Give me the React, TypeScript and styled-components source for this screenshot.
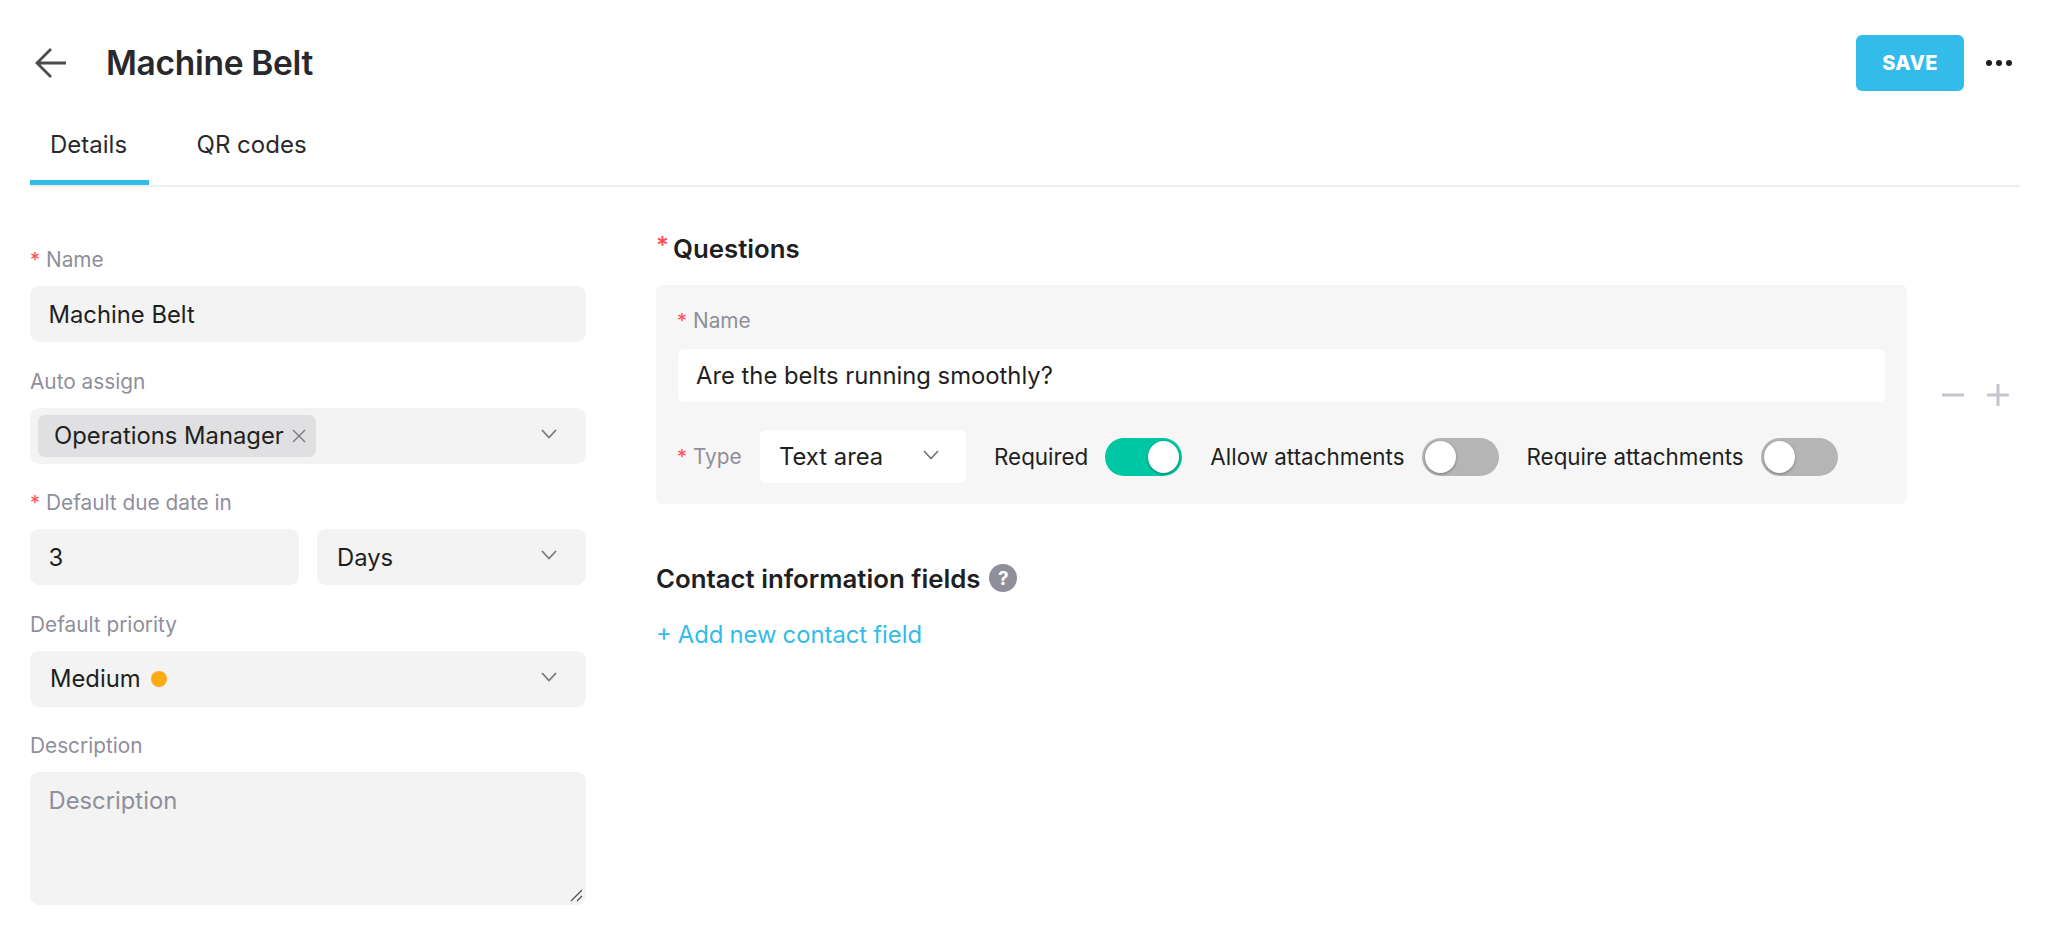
import * as React from "react";
import styled, { createGlobalStyle } from "styled-components";

const GlobalStyle = createGlobalStyle`
  html, body {
    margin: 0;
    background: #fff;
    font-family: Inter, "Liberation Sans", sans-serif;
    color: #1f1f21;
  }
  * { box-sizing: border-box; }
`;

const Page = styled.div`
  padding: 35px 28px 0 30px;
  height: 941px;
  overflow: hidden;
`;

const Header = styled.header`
  display: flex;
  align-items: center;
  height: 56px;
`;

const BackButton = styled.div`
  display: flex;
  width: 76px;
  padding-left: 5px;
  color: #4b4b50;
`;

const Title = styled.h1`
  flex: 1;
  margin: 0;
  font-size: 33.5px;
  font-weight: 600;
  letter-spacing: -0.3px;
  color: #29292b;
`;

const SaveButton = styled.button`
  width: 108px;
  height: 56px;
  border: none;
  border-radius: 6px;
  background: #33bce9;
  color: #fff;
  font-family: inherit;
  font-size: 20px;
  font-weight: 800;
  letter-spacing: 0.4px;
`;

const MoreDots = styled.div`
  display: flex;
  gap: 4px;
  margin: 0 8px 0 22px;
`;

const Dot = styled.span`
  width: 6px;
  height: 6px;
  border-radius: 50%;
  background: #1f1f21;
`;

const TabBar = styled.nav`
  display: flex;
  gap: 27.5px;
  height: 96px;
  align-items: flex-end;
  border-bottom: 2px solid #eeeeef;
`;

const Tab = styled.div<{ $active?: boolean }>`
  display: flex;
  align-items: center;
  height: 62px;
  padding: 0 22px 14px 20px;
  font-size: 24px;
  color: #29292b;
  border-bottom: 5px solid ${(p) => (p.$active ? "#33bce9" : "transparent")};
`;

const Body = styled.main`
  display: grid;
  grid-template-columns: 556px 1fr;
  gap: 70px;
  padding-top: 46px;
`;

const LeftColumn = styled.div`
  padding-top: 13px;
`;

const Field = styled.div`
  display: flex;
  flex-direction: column;
  gap: 13px;
  margin-bottom: 25.5px;
`;

const Label = styled.label`
  display: flex;
  align-items: center;
  height: 27px;
  font-size: 20.8px;
  color: #8f8f9b;
`;

const Star = styled.span`
  color: #ff4d57;
  width: 16px;
  font-size: 20px;
  flex: none;
`;

const Control = styled.div`
  display: flex;
  align-items: center;
  justify-content: space-between;
  height: 56px;
  padding: 0 19px 0 18.5px;
  border-radius: 9px;
  background: #f3f3f3;
  font-size: 23.8px;
  color: #1f1f21;
`;

const SelectControl = styled(Control)`
  padding: 0 29px 0 20px;
`;

const ChipControl = styled(Control)`
  padding: 0 29px 0 8px;
`;

const Chip = styled.div`
  display: flex;
  align-items: center;
  gap: 8px;
  height: 42px;
  padding: 0 10px 0 16px;
  border-radius: 7px;
  background: #e0e0e3;
`;

const ChipClose = styled.svg`
  width: 14px;
  height: 14px;
  stroke: #77777d;
  stroke-width: 1.4;
  fill: none;
`;

const Chevron = styled.svg`
  width: 16px;
  height: 10px;
  margin-bottom: 4px;
  stroke: #77777d;
  stroke-width: 1.8;
  fill: none;
  flex: none;
`;

const Pair = styled.div`
  display: grid;
  grid-template-columns: 1fr 1fr;
  gap: 18px;
`;

const PriorityValue = styled.div`
  display: flex;
  align-items: center;
  gap: 10px;
`;

const PriorityDot = styled.span`
  width: 16px;
  height: 16px;
  border-radius: 50%;
  background: #fdab12;
`;

const TextArea = styled.div`
  position: relative;
  height: 133px;
  padding: 14px 19px 13px 18.5px;
  border-radius: 9px;
  background: #f3f3f3;
  font-size: 23.8px;
  color: #8f8f9b;
`;

const ResizeGrip = styled.svg`
  position: absolute;
  right: 3px;
  bottom: 3px;
  width: 13px;
  height: 13px;
  stroke: #4b4b50;
  stroke-width: 1.2;
`;

const SectionTitle = styled.h2`
  display: flex;
  align-items: center;
  margin: 0;
  height: 30px;
  font-size: 25.8px;
  font-weight: 600;
  color: #1f1f21;
`;

const TitleStar = styled.span`
  width: 17px;
  color: #ff4d57;
  font-size: 24px;
  align-self: flex-start;
  line-height: 26px;
`;

const QuestionRow = styled.div`
  position: relative;
  margin: 22px 113px 0 0;
`;

const QuestionPanel = styled.section`
  display: flex;
  flex-direction: column;
  height: 219px;
  padding: 22px 22px 0 21px;
  border-radius: 6px;
  background: #f6f6f6;
`;

const WhiteInput = styled.div`
  display: flex;
  align-items: center;
  height: 53px;
  margin: 15px 0 28px 1px;
  padding: 0 18px;
  border-radius: 6px;
  background: #fff;
  font-size: 23.8px;
`;

const OptionsRow = styled.div`
  display: flex;
  align-items: center;
`;

const TypeLabel = styled(Label)`
  width: 83px;
  height: 53px;
`;

const TypeSelect = styled.div`
  display: flex;
  align-items: center;
  justify-content: space-between;
  width: 206px;
  height: 53px;
  padding: 0 27px 0 19px;
  border-radius: 6px;
  background: #fff;
  font-size: 23.8px;
`;

const OptionText = styled.span`
  margin: 0 17px 0 28px;
  font-size: 22.4px;
`;

const Toggle = styled.div<{ $on?: boolean }>`
  display: flex;
  justify-content: ${(p) => (p.$on ? "flex-end" : "flex-start")};
  align-items: center;
  width: 77px;
  height: 38px;
  padding: 3px;
  border-radius: 19px;
  background: ${(p) => (p.$on ? "#00c7a3" : "#b5b5b5")};
`;

const ToggleKnob = styled.span`
  width: 31px;
  height: 32px;
  border-radius: 50%;
  background: #fff;
  box-shadow: 0 1px 3px rgba(0, 0, 0, 0.35);
`;

const RowActions = styled.div`
  position: absolute;
  left: 1286px;
  top: 99px;
  display: flex;
  gap: 23px;
`;

const RowActionIcon = styled.svg`
  width: 22px;
  height: 22px;
  stroke: #c4c4cd;
  stroke-width: 3;
  stroke-linecap: round;
`;

const ContactTitle = styled(SectionTitle)`
  margin-top: 59px;
  gap: 9px;
`;

const HelpBadge = styled.span`
  display: flex;
  align-items: center;
  justify-content: center;
  width: 28px;
  height: 28px;
  border-radius: 50%;
  background: #8f8f9b;
  color: #fff;
  font-size: 19px;
  font-weight: 700;
`;

const AddLink = styled.a`
  display: block;
  margin-top: 27px;
  font-size: 23.8px;
  word-spacing: -0.6px;
  color: #33bce9;
`;

const ChevronDown = () => (
  <Chevron viewBox="0 0 16 10">
    <path d="M1 1l7 7.5L15 1" />
  </Chevron>
);

export default function App() {
  return (
    <Page>
      <GlobalStyle />
      <Header>
        <BackButton>
          <svg width="32" height="30" viewBox="0 0 32 30" fill="none" stroke="currentColor" strokeWidth="2.8">
            <path d="M31 15H2M16 1L2 15l14 14" />
          </svg>
        </BackButton>
        <Title>Machine Belt</Title>
        <SaveButton>SAVE</SaveButton>
        <MoreDots>
          <Dot />
          <Dot />
          <Dot />
        </MoreDots>
      </Header>
      <TabBar>
        <Tab $active>Details</Tab>
        <Tab>QR codes</Tab>
      </TabBar>
      <Body>
        <LeftColumn>
          <Field>
            <Label>
              <Star>*</Star>Name
            </Label>
            <Control>Machine Belt</Control>
          </Field>
          <Field>
            <Label>Auto assign</Label>
            <ChipControl>
              <Chip>
                Operations Manager
                <ChipClose viewBox="0 0 14 14">
                  <path d="M1 1l12 12M13 1L1 13" />
                </ChipClose>
              </Chip>
              <ChevronDown />
            </ChipControl>
          </Field>
          <Field>
            <Label>
              <Star>*</Star>Default due date in
            </Label>
            <Pair>
              <Control>3</Control>
              <SelectControl>
                Days
                <ChevronDown />
              </SelectControl>
            </Pair>
          </Field>
          <Field>
            <Label>Default priority</Label>
            <SelectControl>
              <PriorityValue>
                Medium
                <PriorityDot />
              </PriorityValue>
              <ChevronDown />
            </SelectControl>
          </Field>
          <Field>
            <Label>Description</Label>
            <TextArea>
              Description
              <ResizeGrip viewBox="0 0 13 13">
                <path d="M1 12L12 1M7 12l5-5" />
              </ResizeGrip>
            </TextArea>
          </Field>
        </LeftColumn>
        <div>
          <SectionTitle>
            <TitleStar>*</TitleStar>Questions
          </SectionTitle>
          <QuestionRow>
            <QuestionPanel>
              <Label>
                <Star>*</Star>Name
              </Label>
              <WhiteInput>Are the belts running smoothly?</WhiteInput>
              <OptionsRow>
                <TypeLabel>
                  <Star>*</Star>Type
                </TypeLabel>
                <TypeSelect>
                  Text area
                  <ChevronDown />
                </TypeSelect>
                <OptionText>Required</OptionText>
                <Toggle $on>
                  <ToggleKnob />
                </Toggle>
                <OptionText>Allow attachments</OptionText>
                <Toggle>
                  <ToggleKnob />
                </Toggle>
                <OptionText>Require attachments</OptionText>
                <Toggle>
                  <ToggleKnob />
                </Toggle>
              </OptionsRow>
            </QuestionPanel>
            <RowActions>
              <RowActionIcon viewBox="0 0 22 22">
                <path d="M1 11h20" />
              </RowActionIcon>
              <RowActionIcon viewBox="0 0 22 22">
                <path d="M1 11h20M11 1v20" />
              </RowActionIcon>
            </RowActions>
          </QuestionRow>
          <ContactTitle>
            Contact information fields
            <HelpBadge>?</HelpBadge>
          </ContactTitle>
          <AddLink>+ Add new contact field</AddLink>
        </div>
      </Body>
    </Page>
  );
}
